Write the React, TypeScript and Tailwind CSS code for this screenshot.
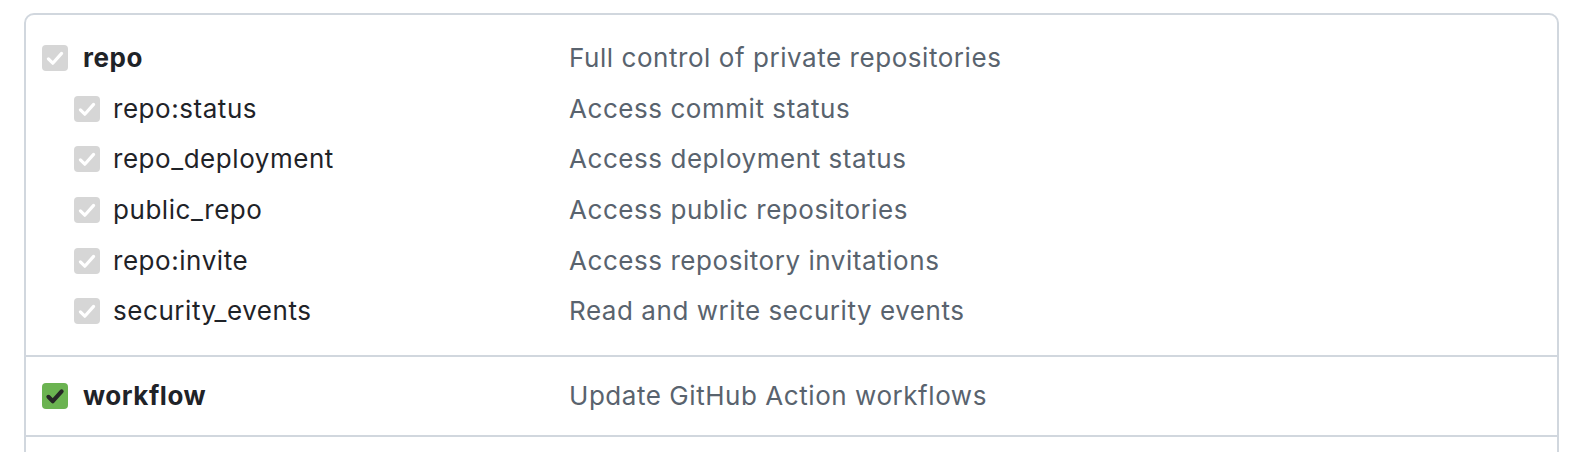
const scopes = [
  { name: "repo:status", desc: "Access commit status" },
  { name: "repo_deployment", desc: "Access deployment status" },
  { name: "public_repo", desc: "Access public repositories" },
  { name: "repo:invite", desc: "Access repository invitations" },
  { name: "security_events", desc: "Read and write security events" },
];

function Check({ on }: { on?: boolean }) {
  return (
    <span
      className={
        on
          ? "flex h-[26px] w-[26px] shrink-0 items-center justify-center rounded-[4px] bg-[#6bb351]"
          : "flex h-[26px] w-[26px] shrink-0 items-center justify-center rounded-[4px] bg-[#d6d6d6]"
      }
    >
      <svg viewBox="0 0 16 16" className="h-[22px] w-[22px]" fill="none">
        <path
          d="M3.2 8.6 6.4 11.8 12.8 4.6"
          stroke={on ? "#262626" : "#ffffff"}
          strokeWidth={on ? 3 : 2.3}
          strokeLinecap="round"
          strokeLinejoin="round"
        />
      </svg>
    </span>
  );
}

function Row({
  name,
  desc,
  top,
  on,
}: {
  name: string;
  desc: string;
  top?: boolean;
  on?: boolean;
}) {
  return (
    <div className="flex h-[50.6px] items-center">
      <div className={top ? "flex w-[527px] items-center gap-[15px]" : "flex w-[527px] items-center gap-[13px] pl-8"}>
        <Check on={on} />
        <span className={top ? "font-bold text-[#1f2328]" : "text-[#1f2328]"}>{name}</span>
      </div>
      <span className="text-[#59636e]">{desc}</span>
    </div>
  );
}

export default function App() {
  return (
    <div className="h-[452px] overflow-hidden bg-white pl-6 pr-[29px] pt-[13px] font-['Inter',sans-serif] text-[26px] leading-none tracking-[0.55px]">
      <div className="h-[600px] rounded-[10px] border-2 border-[#d1d7de]">
        <div className="px-4 py-[18px]">
          <Row top name="repo" desc="Full control of private repositories" />
          {scopes.map((s) => (
            <Row key={s.name} name={s.name} desc={s.desc} />
          ))}
        </div>
        <div className="border-t-2 border-[#d1d7de] px-4 py-[14px]">
          <Row top on name="workflow" desc="Update GitHub Action workflows" />
        </div>
        <div className="h-20 border-t-2 border-[#d1d7de]" />
      </div>
    </div>
  );
}
